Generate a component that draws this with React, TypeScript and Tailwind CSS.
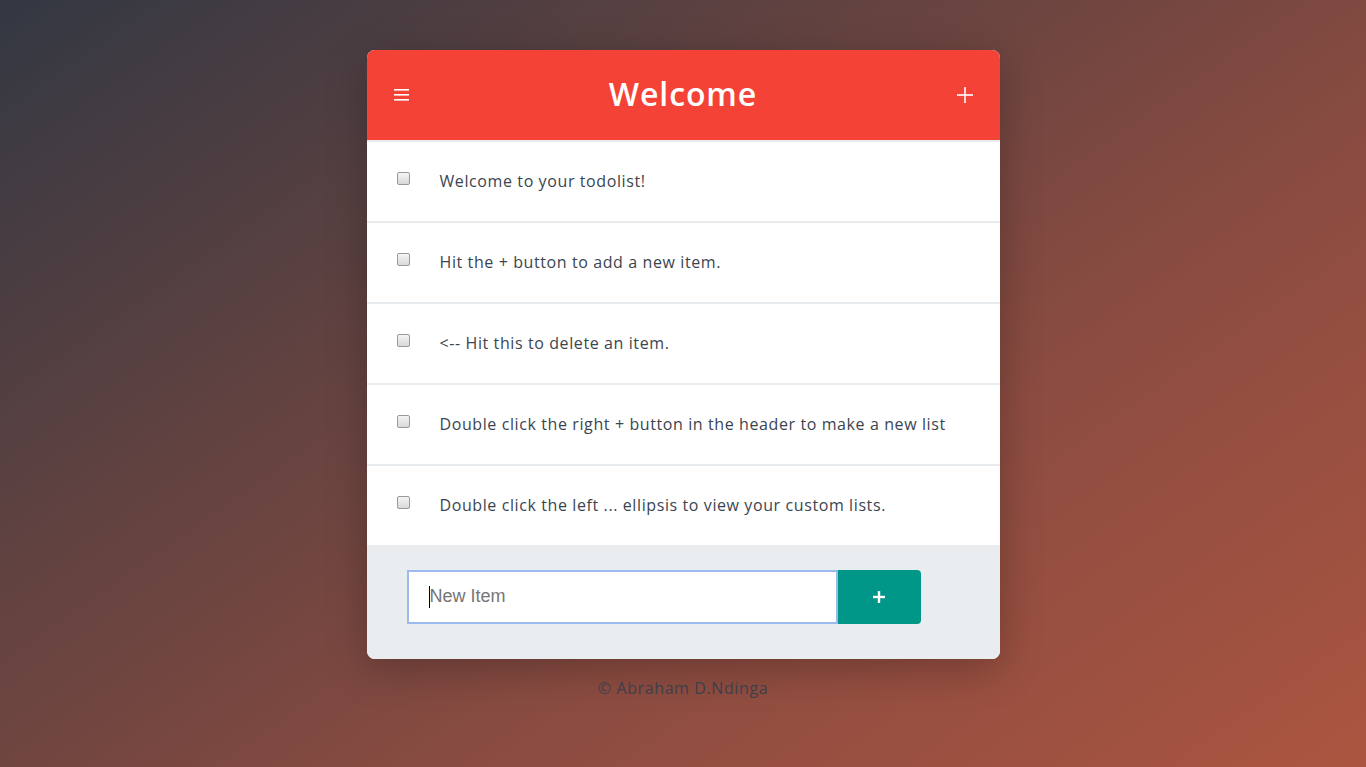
import React from "react";

const items = [
  "Welcome to your todolist!",
  "Hit the + button to add a new item.",
  "<-- Hit this to delete an item.",
  "Double click the right + button in the header to make a new list",
  "Double click the left ... ellipsis to view your custom lists.",
];

export default function App() {
  return (
    <div
      className="min-h-[767px] w-full bg-[linear-gradient(145deg,#333843_0%,#6a4440_40%,#8c4c41_65%,#ab5540_100%)] flex flex-col items-center pt-[50px]"
      style={{ fontFamily: '"Open Sans", "Noto Sans", sans-serif' }}
    >
      <div className="w-[633px] rounded-[8px] overflow-hidden shadow-[0_10px_40px_rgba(0,0,0,0.25)] bg-white">
        <div className="h-[90px] bg-[#f44336] flex items-center justify-between px-[27px] text-white">
          <svg width="16" height="14" viewBox="0 0 16 14">
            <rect x="0" y="1" width="15" height="1.6" fill="white" />
            <rect x="0" y="6" width="15" height="1.6" fill="white" />
            <rect x="0" y="11" width="15" height="1.6" fill="white" />
          </svg>
          <div
            className="text-[32px] font-semibold leading-none tracking-[0.9px] pb-[2px]"
            style={{ fontFamily: '"Open Sans", sans-serif' }}
          >
            Welcome
          </div>
          <svg width="16" height="16" viewBox="0 0 16 16">
            <rect x="7.2" y="0" width="1.6" height="16" fill="white" />
            <rect x="0" y="7.2" width="16" height="1.6" fill="white" />
          </svg>
        </div>
        <div>
          {items.map((t, i) => (
            <div
              key={i}
              className="h-[81px] border-t-2 border-[#e8ecef] flex items-center pl-[30px]"
            >
              <div className="w-[13px] h-[13px] rounded-[2px] border border-[#9a9a9a] bg-[linear-gradient(#f4f4f4,#d9d9d9)] mt-[-7px]" />
              <div className="ml-[30px] mt-[-2px] text-[16px] tracking-[0.6px] text-[#3b4550]">{t}</div>
            </div>
          ))}
        </div>
        <div className="bg-[#e9edf0] pt-[25px] pb-[35px] pl-[40px] flex">
          <div className="w-[431px] h-[54px] bg-white border-2 border-[#9dbaf0] flex items-center pl-[20px]">
            <span className="w-px h-[22px] bg-black" />
            <span
              className="text-[18px] text-[#757575] mt-[-2px]"
              style={{ fontFamily: '"Liberation Sans", Arial, sans-serif' }}
            >
              New Item
            </span>
          </div>
          <div className="w-[83px] h-[54px] bg-[#009688] rounded-r-[4px] flex items-center justify-center">
            <svg width="12" height="12" viewBox="0 0 12 12">
              <rect x="4.8" y="0" width="2.4" height="12" fill="white" />
              <rect x="0" y="4.8" width="12" height="2.4" fill="white" />
            </svg>
          </div>
        </div>
      </div>
      <div className="mt-[17px] text-[16px] tracking-[0.6px] text-[#3d3f4a]">© Abraham D.Ndinga</div>
    </div>
  );
}
